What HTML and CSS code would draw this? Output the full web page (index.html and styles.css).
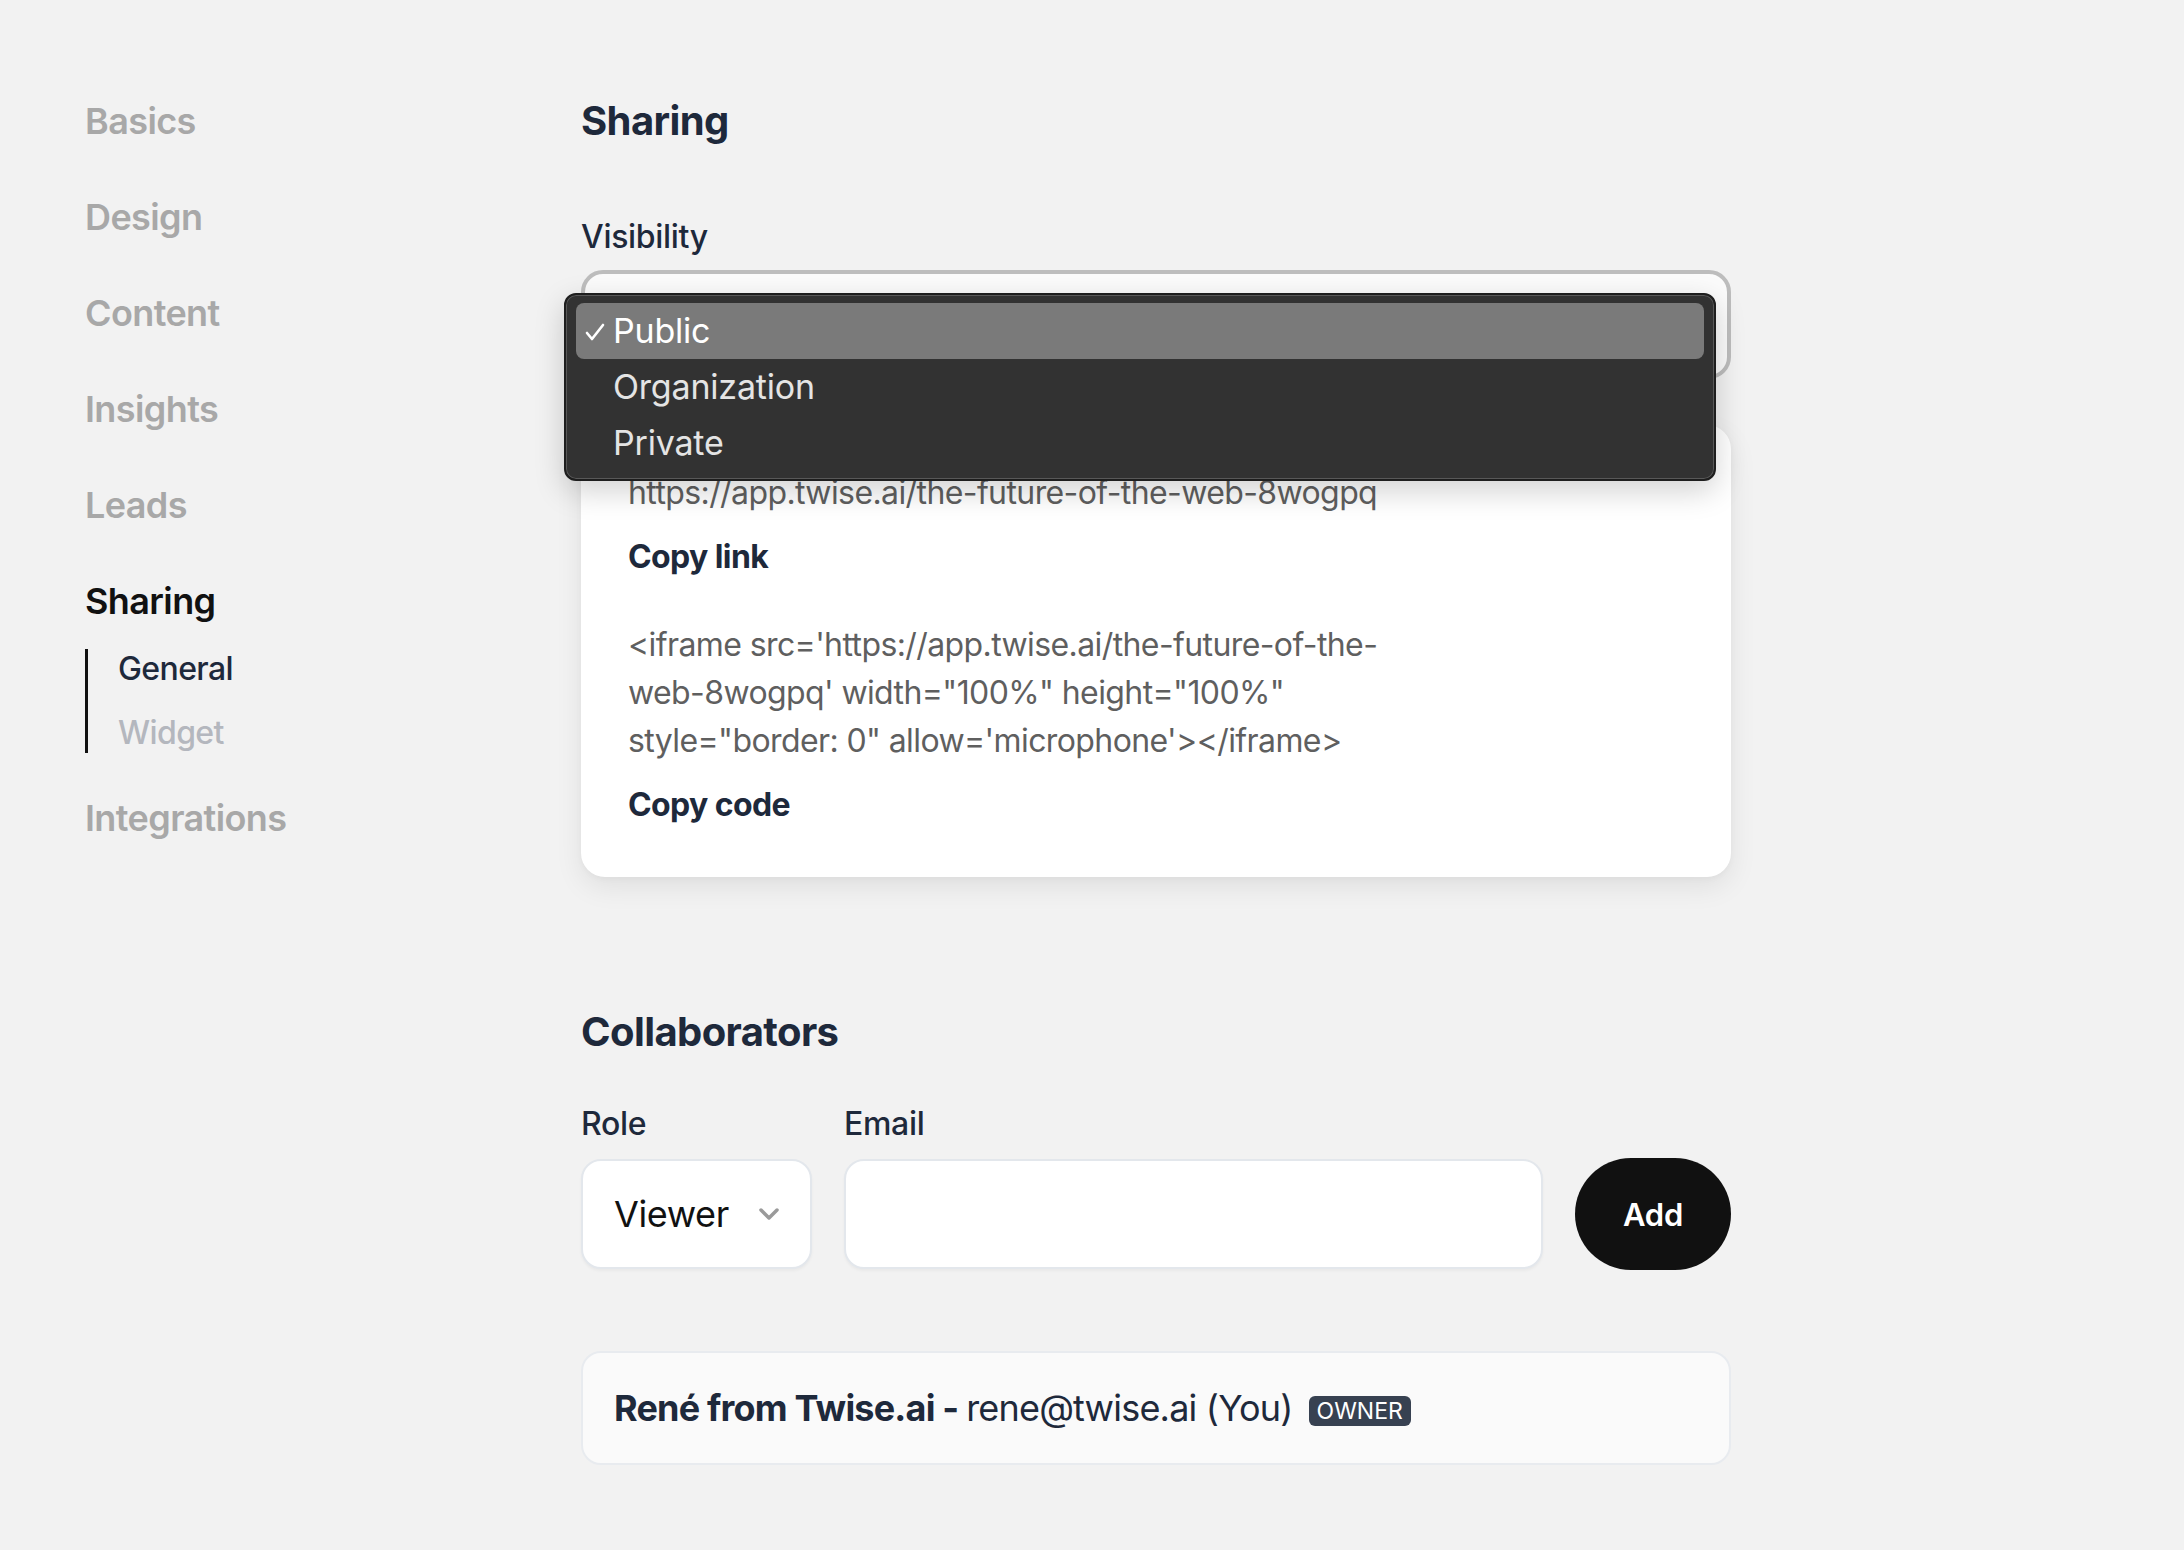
FILE: index.html
```html
<!DOCTYPE html>
<html lang="en">
<head>
<meta charset="utf-8">
<title>Sharing</title>
<link rel="stylesheet" href="styles.css">
</head>
<body>
<div class="layout">
  <nav class="sidebar">
    <ul class="nav">
      <li class="nav-item">Basics</li>
      <li class="nav-item">Design</li>
      <li class="nav-item">Content</li>
      <li class="nav-item">Insights</li>
      <li class="nav-item">Leads</li>
      <li class="nav-item active">Sharing</li>
    </ul>
    <ul class="subnav">
      <li class="sub-item active">General</li>
      <li class="sub-item">Widget</li>
    </ul>
    <ul class="nav nav-last">
      <li class="nav-item">Integrations</li>
    </ul>
  </nav>

  <main class="main">
    <h2 class="heading">Sharing</h2>
    <div class="label label-visibility">Visibility</div>
    <div class="select-wrap">
      <div class="select-visibility"></div>
      <div class="menu">
        <div class="menu-item selected"><svg class="check" width="20" height="20" viewBox="0 0 20 20"><path d="M2 11 L7 17 L18 3" fill="none" stroke="#ffffff" stroke-width="2.6" stroke-linecap="round" stroke-linejoin="round"/></svg>Public</div>
        <div class="menu-item">Organization</div>
        <div class="menu-item">Private</div>
      </div>
    </div>

    <section class="card">
      <div class="code-text">https://app.twise.ai/the-future-of-the-web-8wogpq</div>
      <div class="copy">Copy link</div>
      <div class="code-text code-block">&lt;iframe src='https://app.twise.ai/the-future-of-the-web-8wogpq' width="100%" height="100%" style="border: 0" allow='microphone'&gt;&lt;/iframe&gt;</div>
      <div class="copy">Copy code</div>
    </section>

    <h2 class="heading heading-collab">Collaborators</h2>
    <div class="invite">
      <div class="field field-role">
        <div class="label">Role</div>
        <div class="role-select">
          <span>Viewer</span>
          <svg class="chevron" width="22" height="14" viewBox="0 0 22 14"><path d="M3 3 L11 11 L19 3" fill="none" stroke="#9a9a9a" stroke-width="3.5" stroke-linecap="round" stroke-linejoin="round"/></svg>
        </div>
      </div>
      <div class="field field-email">
        <div class="label">Email</div>
        <div class="email-input"></div>
      </div>
      <button class="add-btn">Add</button>
    </div>

    <div class="collab-row">
      <span class="collab-name">René from Twise.ai - </span><span class="collab-email">rene@twise.ai (You)</span>
      <span class="badge">OWNER</span>
    </div>
  </main>
</div>
</body>
</html>
```

FILE: styles.css
```css
* { box-sizing: border-box; }

html, body {
  margin: 0;
  padding: 0;
}

body {
  background: #f2f2f2;
  font-family: Inter, "Noto Sans", "Liberation Sans", sans-serif;
  color: #1e293b;
  width: 2184px;
  height: 1550px;
  overflow: hidden;
}

.layout {
  display: flex;
  padding: 73px 0 0 85px;
}

.sidebar {
  width: 496px;
  flex: none;
}

.nav, .subnav {
  list-style: none;
  margin: 0;
  padding: 0;
}

.nav-item {
  font-size: 36px;
  font-weight: 600;
  line-height: 96px;
  color: #a8a8a8;
  letter-spacing: -0.6px;
}

.nav-item.active {
  color: #111111;
}

.subnav {
  border-left: 3px solid #111111;
  display: flex;
  flex-direction: column;
  gap: 24px;
  padding-left: 30px;
}

.sub-item {
  font-size: 32px;
  font-weight: 500;
  line-height: 40px;
  color: #b4b7be;
  letter-spacing: -0.6px;
}

.sub-item.active {
  color: #1e293b;
}

.nav-last {
  margin-top: 17px;
}

.main {
  width: 1150px;
  flex: none;
  padding-top: 24px;
}

.heading {
  margin: 0;
  font-size: 40px;
  line-height: 48px;
  font-weight: 700;
  letter-spacing: -0.6px;
  color: #1e293b;
}

.label {
  font-size: 32px;
  font-weight: 500;
  line-height: 48px;
  color: #1e293b;
  letter-spacing: -0.3px;
}

.label-visibility {
  margin-top: 68px;
}

.select-wrap {
  position: relative;
  margin-top: 9px;
}

.select-visibility {
  height: 109px;
  border: 4px solid #bdbdbd;
  border-radius: 22px;
  background: #fbfbfb;
}

.menu {
  position: absolute;
  left: -17px;
  top: 23px;
  width: 1152px;
  padding: 8px 10px;
  background: #323232;
  border: 2px solid #1e1e1e;
  border-radius: 12px;
  box-shadow: inset 0 0 0 1px #585858, 0 10px 30px rgba(0, 0, 0, 0.18);
  z-index: 10;
}

.menu-item {
  position: relative;
  height: 56px;
  line-height: 56px;
  padding-left: 37px;
  font-size: 34px;
  color: #e4e4e4;
  border-radius: 8px;
  letter-spacing: -0.2px;
}

.menu-item.selected {
  background: #7a7a7a;
  color: #ffffff;
}

.check {
  position: absolute;
  left: 9px;
  top: 19px;
}

.card {
  margin-top: 46px;
  background: #ffffff;
  border-radius: 24px;
  padding: 44px 47px 48px;
  box-shadow: 0 10px 28px rgba(0, 0, 0, 0.08), 0 2px 6px rgba(0, 0, 0, 0.03);
}

.code-text {
  font-size: 32px;
  line-height: 48px;
  color: #5f5f5f;
  letter-spacing: -0.6px;
}

.code-block {
  margin-top: 40px;
  max-width: 760px;
}

.copy {
  margin-top: 16px;
  font-size: 32px;
  line-height: 48px;
  font-weight: 700;
  color: #1e293b;
  letter-spacing: -0.6px;
}

.heading-collab {
  margin-top: 131px;
}

.invite {
  display: flex;
  align-items: flex-end;
  gap: 32px;
  margin-top: 44px;
}

.field {
  display: flex;
  flex-direction: column;
  gap: 11px;
}

.field-role { width: 231px; }
.field-email { width: 699px; }

.role-select, .email-input {
  height: 110px;
  background: #ffffff;
  border: 2px solid #e3e7ec;
  border-radius: 20px;
  box-shadow: 0 2px 3px rgba(0, 0, 0, 0.04);
}

.role-select {
  display: flex;
  align-items: center;
  justify-content: space-between;
  padding: 0 30px 0 31px;
  font-size: 36px;
  color: #111111;
  letter-spacing: -0.4px;
}

.chevron {
  display: block;
}

.add-btn {
  width: 156px;
  height: 112px;
  margin-bottom: -1px;
  border: none;
  border-radius: 56px;
  background: #111111;
  color: #ffffff;
  font-family: inherit;
  font-size: 31px;
  font-weight: 600;
  letter-spacing: -0.3px;
  padding: 0;
}

.collab-row {
  margin-top: 82px;
  height: 114px;
  display: flex;
  align-items: center;
  padding-left: 31px;
  background: #fafafa;
  border: 2px solid #e8ebef;
  border-radius: 20px;
  font-size: 36px;
  color: #1e293b;
  letter-spacing: -0.8px;
  white-space: pre;
}

.collab-name {
  font-weight: 700;
}

.badge {
  margin-left: 16px;
  background: #374151;
  color: #ffffff;
  font-size: 23px;
  line-height: 30px;
  padding: 0 8px;
  border-radius: 6px;
  letter-spacing: 0;
  margin-top: 6px;
}
```
